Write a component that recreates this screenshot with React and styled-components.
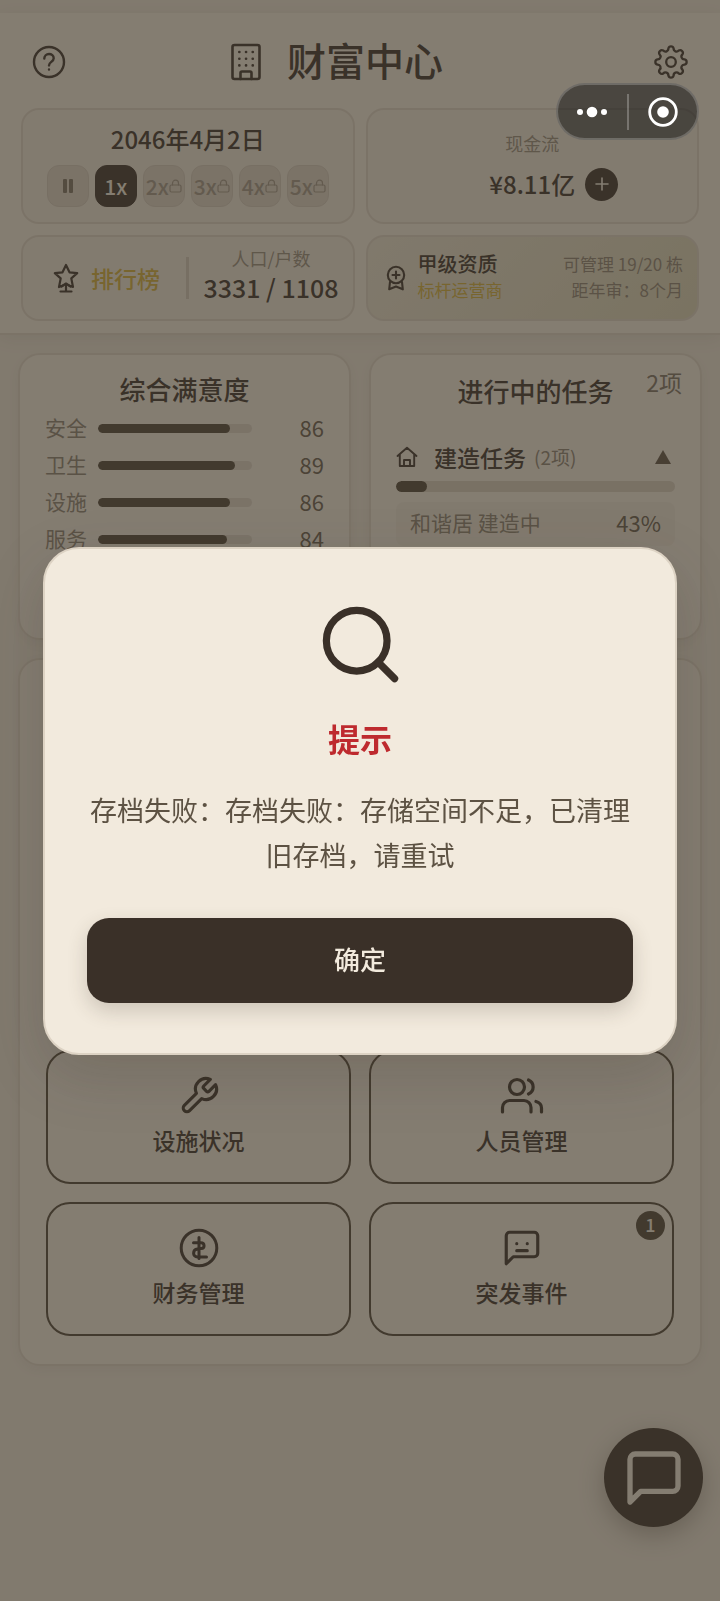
// src/App.jsx
import { useState } from 'react';
import styled, { createGlobalStyle } from 'styled-components';



const speeds = [
  { id: 1, label: '1x' },
  { id: 2, label: '2x', locked: true },
  { id: 3, label: '3x', locked: true },
  { id: 4, label: '4x', locked: true },
  { id: 5, label: '5x', locked: true },
];

const satisfaction = [
  { name: '安全', value: 86 },
  { name: '卫生', value: 89 },
  { name: '设施', value: 86 },
  { name: '服务', value: 84 },
];

const tiles = [
  { name: '设施状况', icon: WrenchIcon },
  { name: '人员管理', icon: StaffIcon },
  { name: '财务管理', icon: CoinIcon },
  { name: '突发事件', icon: EventIcon, badge: 1 },
];

export default function App() {
  const [speed, setSpeed] = useState(1);
  const [tasksOpen, setTasksOpen] = useState(true);
  const [alertOpen, setAlertOpen] = useState(true);

  return (
    <Page>
      <GlobalStyle />
      <Header>
        <TitleBar>
          <IconButton type="button" aria-label="帮助"><HelpIcon /></IconButton>
          <Title><BuildingIcon /><TitleText>财富中心</TitleText></Title>
          <IconButton type="button" aria-label="设置"><GearIcon /></IconButton>
        </TitleBar>
        <StatGrid>
          <StatCard>
            <StatValue>2046年4月2日</StatValue>
            <SpeedRow>
              <SpeedButton type="button" aria-label="暂停"><PauseIcon /></SpeedButton>
              {speeds.map(item => (
                <SpeedButton
                  key={item.id}
                  type="button"
                  $active={speed === item.id}
                  disabled={item.locked}
                  onClick={() => setSpeed(item.id)}
                >
                  {item.label}
                  {item.locked && <LockIcon />}
                </SpeedButton>
              ))}
            </SpeedRow>
          </StatCard>
          <CashCard>
            <StatLabel>现金流</StatLabel>
            <CashRow>
              <StatValue>¥8.11亿</StatValue>
              <AddButton type="button" aria-label="增加"><PlusIcon /></AddButton>
            </CashRow>
          </CashCard>
          <RankCard>
            <RankButton type="button"><StarIcon />排行榜</RankButton>
            <Divider />
            <Population>
              <StatLabel>人口/户数</StatLabel>
              <PopulationValue>3331 / 1108</PopulationValue>
            </Population>
          </RankCard>
          <GradeCard>
            <MedalIcon />
            <GradeText>
              <GradeName>甲级资质</GradeName>
              <GradeTag>标杆运营商</GradeTag>
            </GradeText>
            <GradeInfo>
              <span>可管理 19/20 栋</span>
              <span>距年审：8个月</span>
            </GradeInfo>
          </GradeCard>
        </StatGrid>
      </Header>

      <Main>
        <Columns>
          <Panel>
            <PanelTitle>综合满意度</PanelTitle>
            <ScoreList>
              {satisfaction.map(item => (
                <ScoreRow key={item.name}>
                  <ScoreName>{item.name}</ScoreName>
                  <Track role="progressbar" aria-label={item.name} aria-valuenow={item.value}>
                    <Fill style={{ width: `${item.value}%` }} />
                  </Track>
                  <Score>{item.value}</Score>
                </ScoreRow>
              ))}
            </ScoreList>
          </Panel>
          <Panel>
            <TaskTitle>进行中的任务</TaskTitle>
            <TaskCount>2项</TaskCount>
            <TaskHeader type="button" aria-expanded={tasksOpen} onClick={() => setTasksOpen(!tasksOpen)}>
              <HouseIcon />
              <TaskName>建造任务</TaskName>
              <TaskAmount>(2项)</TaskAmount>
              <TriangleIcon />
            </TaskHeader>
            <TaskTrack role="progressbar" aria-label="建造任务" aria-valuenow={11}>
              <Fill style={{ width: '11%' }} />
            </TaskTrack>
            {tasksOpen && (
              <TaskItem>
                <ScoreName>和谐居 建造中</ScoreName>
                <Score>43%</Score>
              </TaskItem>
            )}
          </Panel>
        </Columns>
        <MenuPanel>
          {tiles.map(({ name, icon: Icon, badge }) => (
            <Tile key={name} type="button">
              <Icon />
              {name}
              {badge && <Badge>{badge}</Badge>}
            </Tile>
          ))}
        </MenuPanel>
      </Main>

      <ChatButton type="button" aria-label="消息"><ChatIcon /></ChatButton>

      {alertOpen && (
        <Overlay>
          <Dialog role="alertdialog" aria-labelledby="alert-title" aria-describedby="alert-text">
            <SearchIcon />
            <AlertTitle id="alert-title">提示</AlertTitle>
            <AlertText id="alert-text">存档失败：存档失败：存储空间不足，已清理旧存档，请重试</AlertText>
            <ConfirmButton type="button" onClick={() => setAlertOpen(false)}>确定</ConfirmButton>
          </Dialog>
        </Overlay>
      )}

      <Capsule>
        <CapsuleButton type="button" aria-label="更多"><DotsIcon /></CapsuleButton>
        <CapsuleButton type="button" aria-label="关闭"><TargetIcon /></CapsuleButton>
      </Capsule>
    </Page>
  );
}



// eight round teeth joined by round valleys
function gearPath() {
  const points = [];
  for (let i = 0; i < 8; i++) {
    [-11, 11].forEach(offset => {
      const angle = ((i * 45 + offset - 90) * Math.PI) / 180;
      points.push(`${(18 + 13.8 * Math.cos(angle)).toFixed(2)} ${(18 + 13.8 * Math.sin(angle)).toFixed(2)}`);
    });
  }
  let d = `M${points[0]}`;
  for (let i = 1; i <= 16; i++) {
    d += i % 2 ? `A2.7 2.7 0 0 1 ${points[i]}` : `A2.9 2.9 0 0 0 ${points[i % 16]}`;
  }
  return `${d}Z`;
}

function HelpIcon() {
  return (
    <Stroke width="36" height="36" viewBox="0 0 36 36" strokeWidth="2.4">
      <circle cx="18" cy="18" r="15" />
      <path d="M13.3 14.6c0-2.8 2.1-4.6 4.7-4.6s4.7 1.7 4.7 4.2c0 3.6-4.7 3.7-4.7 7.2M18 25.4v.2" />
    </Stroke>
  );
}

function GearIcon() {
  return (
    <Stroke width="36" height="36" viewBox="0 0 36 36" strokeWidth="2.3">
      <path d={gearPath()} />
      <circle cx="18" cy="18" r="4.8" />
    </Stroke>
  );
}

function BuildingIcon() {
  return (
    <Stroke width="30" height="38" viewBox="0 0 30 38" strokeWidth="2.6">
      <rect x="1.5" y="2" width="27" height="34" rx="2" />
      <path d="M9.5 36v-6a1.5 1.5 0 0 1 1.5-1.5h8a1.5 1.5 0 0 1 1.5 1.5v6" />
      <path d="M8.3 9h.1M15 9h.1M21.7 9h.1M8.3 15.7h.1M15 15.7h.1M21.7 15.7h.1M8.3 22.4h.1M15 22.4h.1M21.7 22.4h.1" />
    </Stroke>
  );
}

function PauseIcon() {
  return (
    <svg width="12" height="14" viewBox="0 0 12 14" fill="currentColor">
      <rect x="1" width="4" height="14" rx="1" />
      <rect x="7" width="4" height="14" rx="1" />
    </svg>
  );
}

function LockIcon() {
  return (
    <Stroke width="13" height="14" viewBox="0 0 13 14" strokeWidth="1.2">
      <rect x="1" y="6" width="11" height="7" rx="1.5" />
      <path d="M3.5 6V4.2a3 3 0 0 1 6 0V6" />
    </Stroke>
  );
}

function PlusIcon() {
  return (
    <Stroke width="14" height="14" viewBox="0 0 14 14" strokeWidth="1.6">
      <path d="M7 1v12M1 7h12" />
    </Stroke>
  );
}

function StarIcon() {
  return (
    <Stroke width="26" height="30" viewBox="0 0 26 30" strokeWidth="2.2">
      <path d="M10 22.5L6 24l1.7-8.6L1.8 10.2l7.7-.9L13 2l3.5 7.3 7.7.9-5.9 5.2L20 24l-4-1.5" />
      <path d="M13 20.5V28M8.5 23.5L13 20.500l4.5 3M7.500 28.500h11" />
    </Stroke>
  );
}

function MedalIcon() {
  return (
    <Stroke width="20" height="26" viewBox="0 0 20 26" strokeWidth="2.1">
      <circle cx="10" cy="10" r="8.2" />
      <path d="M10 6.500v7M6.500 10h7M4 17l-.8 7.300L10 21.500l6.800 2.800L16 17" />
    </Stroke>
  );
}

function HouseIcon() {
  return (
    <Stroke width="22" height="22" viewBox="0 0 22 22" strokeWidth="1.9">
      <path d="M1.500 10L11 1.800 20.500 10M3.800 8.200V20h14.400V8.200M8 20v-6h6v6" />
    </Stroke>
  );
}

function TriangleIcon() {
  return (
    <svg width="16" height="14" viewBox="0 0 16 14" fill="currentColor">
      <path d="M8 0l8 14H0z" />
    </svg>
  );
}

function WrenchIcon() {
  return (
    <Stroke width="42" height="42" viewBox="0 0 24 24" strokeWidth="1.8">
      <path d="M14.700 6.300a1 1 0 0 0 0 1.400l1.600 1.600a1 1 0 0 0 1.400 0l3.770-3.770a6 6 0 0 1-7.940 7.940l-6.910 6.910a2.120 2.120 0 0 1-3-3l6.910-6.910a6 6 0 0 1 7.940-7.940l-3.760 3.760z" />
    </Stroke>
  );
}

function StaffIcon() {
  return (
    <Stroke width="44" height="42" viewBox="0 0 44 42" strokeWidth="3.2">
      <circle cx="17" cy="12" r="7.5" />
      <path d="M2.500 37v-4.500a7 7 0 0 1 7-7H24a7 7 0 0 1 7 7V37M28.500 5a7.600 7.600 0 0 1 0 14M36 26.500c3.500 1 5.500 3.400 5.500 6.500v4" />
    </Stroke>
  );
}

function CoinIcon() {
  return (
    <Stroke width="42" height="42" viewBox="0 0 42 42" strokeWidth="3">
      <circle cx="21" cy="21" r="17.8" />
      <path d="M15.500 15.800h7.200c4.200 0 4.600 5.400.4 5.800l-3.600.4c-5.200.6-5.200 8 0 8h9M21 10.500v21" />
    </Stroke>
  );
}

function EventIcon() {
  return (
    <Stroke width="42" height="42" viewBox="0 0 24 24" strokeWidth="1.8">
      <path d="M21 15a2 2 0 0 1-2 2H7l-4 4V5a2 2 0 0 1 2-2h14a2 2 0 0 1 2 2z" />
      <path d="M9 9.500h.01M15 9.500h.01M9 13.500h6" />
    </Stroke>
  );
}

function ChatIcon() {
  return (
    <Stroke width="64" height="64" viewBox="0 0 24 24" strokeWidth="2">
      <path d="M21 15a2 2 0 0 1-2 2H7l-4 4V5a2 2 0 0 1 2-2h14a2 2 0 0 1 2 2z" />
    </Stroke>
  );
}

function SearchIcon() {
  return (
    <Stroke width="91" height="91" viewBox="0 0 24 24" strokeWidth="1.9">
      <circle cx="11" cy="11" r="8" />
      <path d="M21 21l-4.350-4.350" />
    </Stroke>
  );
}

function DotsIcon() {
  return (
    <svg width="32" height="12" viewBox="0 0 32 12" fill="currentColor">
      <circle cx="4" cy="6" r="3" />
      <circle cx="16" cy="6" r="5.3" />
      <circle cx="28" cy="6" r="3" />
    </svg>
  );
}

function TargetIcon() {
  return (
    <svg width="30" height="30" viewBox="0 0 30 30" fill="none" stroke="currentColor">
      <circle cx="15" cy="15" r="13.3" strokeWidth="2.8" />
      <circle cx="15" cy="15" r="5.8" fill="currentColor" stroke="none" />
    </svg>
  );
}



const GlobalStyle = createGlobalStyle`
  * {
    box-sizing: border-box;
  }

  body {
    margin: 0;
    background: #ebe3d5;
    color: #3a3028;
    font-family: "Noto Sans CJK SC", sans-serif;
  }

  h1, h2, p {
    margin: 0;
  }

  button {
    padding: 0;
    border: none;
    background: none;
    color: inherit;
    font: inherit;
    cursor: pointer;
  }

  svg {
    display: block;
    flex-shrink: 0;
  }
`;

const Stroke = styled.svg`
  fill: none;
  stroke: currentColor;
  stroke-linecap: round;
  stroke-linejoin: round;
`;

const Page = styled.div`
  min-height: 100vh;
  padding-top: 13px;
`;

const Header = styled.header`
  padding: 0 21px 12px;
  background: #f2eadd;
  border-bottom: 2px solid #ddd3c4;
  box-shadow: 0 4px 16px rgba(58, 48, 40, 0.08);
`;

const TitleBar = styled.div`
  display: flex;
  align-items: center;
  justify-content: space-between;
  height: 95px;
  padding: 2px 10px 0;
`;

const IconButton = styled.button`
  display: flex;
`;

const Title = styled.h1`
  display: flex;
  align-items: center;
  gap: 26px;
  padding-right: 46px;
  font-size: 39px;
  font-weight: 500;
  line-height: 48px;
`;

const TitleText = styled.span`
  padding-bottom: 5px;
`;

const StatGrid = styled.div`
  display: grid;
  grid-template-columns: 1fr 1fr;
  grid-template-rows: 116px 86px;
  gap: 11px;
`;

const StatCard = styled.div`
  display: flex;
  flex-direction: column;
  align-items: center;
  justify-content: center;
  gap: 12px;
  border: 2px solid #ddd3c4;
  border-radius: 18px;
  background: #eee6d8;
`;

const CashCard = styled(StatCard)`
  align-items: stretch;
  padding-bottom: 2px;
  text-align: center;
`;

const RankCard = styled(StatCard)`
  flex-direction: row;
  justify-content: space-between;
  padding: 0 14px 0 30px;
`;

const GradeCard = styled(StatCard)`
  flex-direction: row;
  padding: 0 14px 0 18px;
  background: linear-gradient(135deg, #e9e1d0, #d9d2b4);
`;

const StatValue = styled.div`
  font-size: 24px;
  font-weight: 500;
  line-height: 28px;
`;

const PopulationValue = styled(StatValue)`
  font-size: 25px;
  line-height: 32px;
`;

const StatLabel = styled.div`
  color: #978c7c;
  font-size: 18px;
  line-height: 26px;
`;

const SpeedRow = styled.div`
  display: flex;
  gap: 6px;
`;

const SpeedButton = styled.button`
  display: flex;
  align-items: center;
  justify-content: center;
  width: 42px;
  height: 42px;
  border: 1px solid ${props => (props.$active ? '#3a3028' : '#d3c9ba')};
  border-radius: 12px;
  background: ${props => (props.$active ? '#3a3028' : '#dbd1c3')};
  color: ${props => (props.$active ? '#f2eadd' : '#7b7062')};
  font-size: 21px;
  font-weight: 500;
  line-height: 38px;

  &:disabled {
    color: #a09586;
    cursor: default;
  }
`;

const CashRow = styled.div`
  display: grid;
  grid-template-columns: 1fr auto 1fr;
  align-items: center;
  column-gap: 10px;

  > :first-child {
    grid-column: 2;
  }
`;

const AddButton = styled.button`
  display: flex;
  align-items: center;
  justify-content: center;
  width: 33px;
  height: 33px;
  border-radius: 50%;
  background: #3a3028;
  color: #f2eadd;
`;

const RankButton = styled.button`
  display: flex;
  align-items: center;
  gap: 12px;
  font-size: 23px;
  font-weight: 500;
  color: #d4af37;

  svg {
    color: #3a3028;
  }
`;

const Divider = styled.div`
  width: 3px;
  height: 42px;
  margin-left: 12px;
  background: #d3c9ba;
`;

const Population = styled.div`
  display: flex;
  flex-direction: column;
  align-items: center;
  padding-bottom: 8px;
`;

const GradeText = styled.div`
  display: flex;
  flex: 1;
  flex-direction: column;
  padding-bottom: 3px;
  line-height: 26px;
`;

const GradeName = styled.span`
  font-size: 20px;
  font-weight: 500;
`;

const GradeTag = styled.span`
  color: #d4af37;
  font-size: 17px;
`;

const GradeInfo = styled.div`
  display: flex;
  flex-direction: column;
  align-items: flex-end;
  padding-bottom: 3px;
  color: #8c8171;
  font-size: 17px;
  line-height: 26px;
`;

const Main = styled.main`
  display: flex;
  flex-direction: column;
  gap: 18px;
  padding: 18px;
`;

const Columns = styled.div`
  display: grid;
  grid-template-columns: 1fr 1fr;
  gap: 18px;
`;

const Panel = styled.section`
  position: relative;
  min-height: 287px;
  padding: 16px 25px;
  border: 2px solid #ddd3c4;
  border-radius: 22px;
  background: #f2eadd;
  box-shadow: 0 4px 12px rgba(58, 48, 40, 0.05);
`;

const PanelTitle = styled.h2`
  font-size: 26px;
  font-weight: 500;
  line-height: 36px;
  text-align: center;
`;

const TaskTitle = styled(PanelTitle)`
  padding-top: 2px;
`;

const TaskCount = styled.span`
  position: absolute;
  top: 11px;
  right: 18px;
  color: #7b7062;
  font-size: 23px;
  line-height: 32px;
`;

const ScoreList = styled.div`
  display: flex;
  flex-direction: column;
  padding-top: 3px;
`;

const ScoreRow = styled.div`
  display: grid;
  grid-template-columns: 42px 154px 1fr;
  align-items: center;
  column-gap: 11px;
  height: 37px;
`;

const ScoreName = styled.span`
  padding-bottom: 4px;
  color: #8a7f70;
  font-size: 21px;
  line-height: 28px;
`;

const Score = styled.span`
  padding-bottom: 4px;
  color: #665b4c;
  font-size: 22px;
  line-height: 28px;
  text-align: right;
`;

const Track = styled.div`
  height: 9px;
  border-radius: 6px;
  background: #dcd2c4;
  overflow: hidden;
`;

const Fill = styled.div`
  height: 100%;
  border-radius: 6px;
  background: #4e4435;
`;

const TaskHeader = styled.button`
  display: flex;
  align-items: center;
  width: 100%;
  margin-top: 30px;
  line-height: 36px;

  svg:last-child {
    margin-left: auto;
    margin-right: 4px;
    color: #5d5243;
  }
`;

const TaskName = styled.span`
  margin-left: 16px;
  font-size: 23px;
  font-weight: 500;
`;

const TaskAmount = styled.span`
  margin-left: 8px;
  color: #8a7f70;
  font-size: 19px;
`;

const TaskTrack = styled(Track)`
  height: 11px;
  margin-top: 6px;
  background: #d6ccbc;
`;

const TaskItem = styled.div`
  display: flex;
  align-items: center;
  justify-content: space-between;
  height: 44px;
  margin-top: 10px;
  padding: 0 14px;
  border-radius: 8px;
  background: #ece4d5;
`;

const MenuPanel = styled(Panel)`
  display: grid;
  grid-template-columns: 1fr 1fr;
  grid-auto-rows: 134px;
  align-content: end;
  gap: 18px;
  min-height: 708px;
  padding: 28px 26px;
`;

const Tile = styled.button`
  position: relative;
  display: flex;
  flex-direction: column;
  align-items: center;
  justify-content: center;
  gap: 6px;
  padding-bottom: 3px;
  border: 2px solid #4e4435;
  border-radius: 24px;
  font-size: 23px;
  font-weight: 500;
  line-height: 34px;
`;

const Badge = styled.span`
  position: absolute;
  top: 7px;
  right: 7px;
  width: 29px;
  height: 29px;
  border-radius: 50%;
  background: #4e4435;
  color: #f2eadd;
  font-size: 18px;
  line-height: 27px;
`;

const ChatButton = styled.button`
  position: fixed;
  right: 17px;
  bottom: 74px;
  display: flex;
  align-items: center;
  justify-content: center;
  width: 99px;
  height: 99px;
  border-radius: 50%;
  background: #3a3028;
  box-shadow: 0 8px 24px rgba(58, 48, 40, 0.35);
  color: #f2eadd;
`;

const Overlay = styled.div`
  position: fixed;
  inset: 0;
  display: flex;
  align-items: center;
  justify-content: center;
  background: rgba(58, 51, 42, 0.6);
`;

const Dialog = styled.div`
  display: flex;
  flex-direction: column;
  align-items: center;
  width: 88%;
  padding: 50px 42px;
  border: 2px solid #ddd3c4;
  border-radius: 36px;
  background: #f2eadd;
  box-shadow: 0 20px 60px rgba(58, 48, 40, 0.2);
`;

const AlertTitle = styled.h2`
  margin-top: 28px;
  color: #be2a2e;
  font-size: 32px;
  font-weight: 700;
  line-height: 40px;
`;

const AlertText = styled.p`
  margin: 29px 0 41px;
  color: #5d5243;
  font-size: 27px;
  line-height: 45px;
  text-align: center;
`;

const ConfirmButton = styled.button`
  width: 100%;
  height: 85px;
  padding-bottom: 3px;
  border-radius: 22px;
  background: #3a3028;
  box-shadow: 0 8px 20px rgba(58, 48, 40, 0.2);
  color: #f2eadd;
  font-size: 26px;
  font-weight: 500;
`;

const Capsule = styled.div`
  position: fixed;
  top: 83px;
  right: 21px;
  display: flex;
  align-items: center;
  width: 143px;
  height: 57px;
  border: 2px solid rgba(255, 255, 255, 0.2);
  border-radius: 29px;
  background: rgba(0, 0, 0, 0.43);
  color: #fff;
`;

const CapsuleButton = styled.button`
  display: flex;
  flex: 1;
  align-items: center;
  justify-content: center;
  height: 36px;

  & + & {
    border-left: 2px solid rgba(255, 255, 255, 0.25);
  }
`;
